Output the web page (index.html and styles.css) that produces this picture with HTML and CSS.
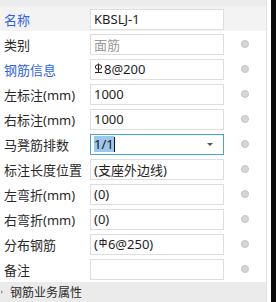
FILE: index.html
```html
<!DOCTYPE html>
<html>
<head>
<meta charset="utf-8">
<link rel="stylesheet" href="styles.css">
</head>
<body>
<div class="frame">
  <div class="panel">
    <div class="topbar"></div>
    <div class="row row-head">
      <div class="label blue">名称</div>
      <div class="field">KBSLJ-1</div>
      <div class="dot-cell"></div>
    </div>
    <div class="row">
      <div class="label">类别</div>
      <div class="field muted">面筋</div>
      <div class="dot-cell"><span class="dot"></span></div>
    </div>
    <div class="row">
      <div class="label blue">钢筋信息</div>
      <div class="field"><svg class="sym3" width="9" height="11" viewBox="0 0 9 11"><ellipse cx="4.5" cy="4" rx="3.2" ry="2.3" fill="none" stroke="#222" stroke-width="1"/><line x1="4.5" y1="0.5" x2="4.5" y2="9.5" stroke="#222" stroke-width="1"/><line x1="1" y1="9.5" x2="8" y2="9.5" stroke="#222" stroke-width="1"/></svg>8@200</div>
      <div class="dot-cell"><span class="dot"></span></div>
    </div>
    <div class="row">
      <div class="label">左标注(mm)</div>
      <div class="field">1000</div>
      <div class="dot-cell"><span class="dot"></span></div>
    </div>
    <div class="row">
      <div class="label">右标注(mm)</div>
      <div class="field">1000</div>
      <div class="dot-cell"><span class="dot"></span></div>
    </div>
    <div class="row">
      <div class="label">马凳筋排数</div>
      <div class="field active"><span class="sel">1/1</span><span class="caret"></span><span class="arrow"></span></div>
      <div class="dot-cell"><span class="dot"></span></div>
    </div>
    <div class="row">
      <div class="label">标注长度位置</div>
      <div class="field">(支座外边线)</div>
      <div class="dot-cell"><span class="dot"></span></div>
    </div>
    <div class="row">
      <div class="label">左弯折(mm)</div>
      <div class="field">(0)</div>
      <div class="dot-cell"><span class="dot"></span></div>
    </div>
    <div class="row">
      <div class="label">右弯折(mm)</div>
      <div class="field">(0)</div>
      <div class="dot-cell"><span class="dot"></span></div>
    </div>
    <div class="row">
      <div class="label">分布钢筋</div>
      <div class="field">(<svg class="sym1" width="8" height="10" viewBox="0 0 8 10"><rect x="1" y="2.5" width="6" height="4" fill="none" stroke="#222" stroke-width="1"/><line x1="4" y1="0.5" x2="4" y2="9.5" stroke="#222" stroke-width="1"/></svg>6@250)</div>
      <div class="dot-cell"><span class="dot"></span></div>
    </div>
    <div class="row">
      <div class="label">备注</div>
      <div class="field"></div>
      <div class="dot-cell"><span class="dot"></span></div>
    </div>
    <div class="group">
      <span class="tri"></span>
      <span class="group-text">钢筋业务属性</span>
    </div>
  </div>
  <div class="gutter"></div>
  <div class="edge"></div>
</div>
</body>
</html>
```
FILE: styles.css
```css
html, body {
  margin: 0;
  padding: 0;
  background: #ffffff;
}
body {
  font-family: "Noto Sans", "Noto Sans CJK SC", sans-serif;
  font-size: 13px;
  color: #222;
}
.frame {
  display: flex;
  width: 276px;
  height: 302px;
  overflow: hidden;
}
.panel {
  width: 266px;
  display: flex;
  flex-direction: column;
  flex: none;
}
.gutter {
  width: 5px;
  flex: none;
  background: #fff;
  border-left: 1px solid #e2e2e2;
  box-sizing: border-box;
}
.edge {
  width: 5px;
  flex: none;
  background: #0a0a0a;
}
.topbar {
  height: 6px;
  background: #ebebeb;
}
.row {
  height: 25px;
  display: flex;
  align-items: center;
  box-sizing: border-box;
  padding-top: 1px;
}
.row-head {
  background: #f3f3f3;
}
.label {
  width: 86px;
  padding-left: 4px;
  flex: none;
  white-space: nowrap;
  color: #2a2a2a;
}
.label.blue {
  color: #2f63ee;
}
.field {
  width: 134px;
  height: 21px;
  box-sizing: border-box;
  border: 1px solid #dedede;
  background: #fff;
  padding-left: 3px;
  display: flex;
  align-items: center;
  flex: none;
  white-space: nowrap;
  color: #1e1e1e;
  position: relative;
}
.field.muted {
  color: #9a9a9a;
}
.field.active {
  border-color: #46a5d2;
}
.sel {
  background: #9cc6ee;
  color: #1a1a1a;
  padding: 0 0 0 0;
  line-height: 16px;
}
.caret {
  width: 1px;
  height: 15px;
  background: #111;
}
.arrow {
  position: absolute;
  right: 10px;
  top: 8px;
  width: 0;
  height: 0;
  border-left: 3px solid transparent;
  border-right: 3px solid transparent;
  border-top: 3px solid #555;
}
.sym3 {
  margin-right: 1px;
  margin-bottom: 2px;
}
.sym1 {
  margin: 0 1px 3px 1px;
}
.dot-cell {
  flex: 1;
  display: flex;
  justify-content: center;
  align-items: center;
}
.dot {
  width: 8px;
  height: 8px;
  border-radius: 50%;
  background: #d6d6d8;
  border: 1px solid #c4c4c6;
  box-sizing: border-box;
}
.group {
  flex: 1;
  background: #ebebeb;
  display: flex;
  align-items: center;
  padding-left: 1px;
  margin-top: 1px;
}
.tri {
  width: 0;
  height: 0;
  border-top: 2px solid transparent;
  border-bottom: 2px solid transparent;
  border-left: 2px solid #999;
  margin-right: 7px;
}
.group-text {
  font-size: 12px;
  color: #2a2a2a;
}
```
